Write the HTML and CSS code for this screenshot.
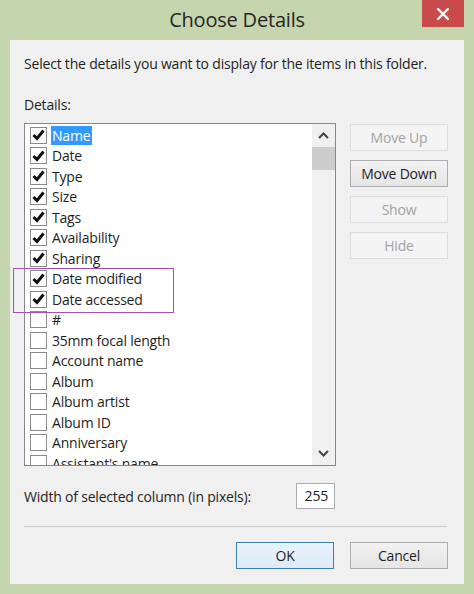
FILE: index.html
```html
<!DOCTYPE html>
<html lang="en">

<head>
  <meta charset="UTF-8" />
  <title>Choose Details</title>
  <link rel="stylesheet" href="styles.css">
</head>

<body>
  <div class="window">
    <div class="titlebar">
      <span class="title">Choose Details</span>
      <span class="close">
        <svg width="14" height="14" viewBox="0 0 14 14">
          <path d="M2 2 L12 12 M12 2 L2 12" stroke="#fff" stroke-width="2.4" stroke-linecap="round" />
        </svg>
      </span>
    </div>

    <div class="client">
      <p class="intro">Select the details you want to display for the items in this folder.</p>
      <p class="label">Details:</p>

      <div class="list-row">
        <div class="listbox">
          <ul class="items" id="items"></ul>
          <div class="scrollbar">
            <span class="arrow">
              <svg width="11" height="7" viewBox="0 0 11 7"><path d="M1 6 L5.5 1.5 L10 6" fill="none" stroke="#444" stroke-width="2" /></svg>
            </span>
            <span class="thumb"></span>
            <span class="track"></span>
            <span class="arrow">
              <svg width="11" height="7" viewBox="0 0 11 7"><path d="M1 1 L5.5 5.5 L10 1" fill="none" stroke="#444" stroke-width="2" /></svg>
            </span>
          </div>
          <div class="marker"></div>
        </div>

        <div class="side-buttons">
          <button class="btn" disabled>Move Up</button>
          <button class="btn">Move Down</button>
          <button class="btn" disabled>Show</button>
          <button class="btn" disabled>Hide</button>
        </div>
      </div>

      <div class="width-row">
        <span>Width of selected column (in pixels):</span>
        <span class="num-box">255</span>
      </div>

      <div class="separator"></div>

      <div class="footer">
        <button class="btn default">OK</button>
        <button class="btn">Cancel</button>
      </div>
    </div>
  </div>

  <script>
    const details = [
      ["Name", true], ["Date", true], ["Type", true], ["Size", true],
      ["Tags", true], ["Availability", true], ["Sharing", true],
      ["Date modified", true], ["Date accessed", true], ["#", false],
      ["35mm focal length", false], ["Account name", false], ["Album", false],
      ["Album artist", false], ["Album ID", false], ["Anniversary", false],
      ["Assistant's name", false]
    ];
    const tick = '<svg width="13" height="12" viewBox="0 0 13 12"><path d="M1.5 6 L5 9.5 L11.5 1.5" fill="none" stroke="#111" stroke-width="3" /></svg>';
    const list = document.getElementById("items");
    details.forEach(function (d, i) {
      const li = document.createElement("li");
      li.className = "item";
      li.innerHTML = '<span class="check">' + (d[1] ? tick : '') + '</span>' +
        '<span class="name' + (i === 0 ? ' selected' : '') + '"></span>';
      li.querySelector(".name").textContent = d[0];
      list.appendChild(li);
    });
  </script>
</body>

</html>
```

FILE: styles.css
```css
:root {
  --frame-green: #c5d5ae;
  --client-bg: #f0f0f0;
  --text-dark: #1e1e1e;
  --select-blue: #3399ff;
}

body {
  margin: 0;
  background: var(--frame-green);
  font-family: 'Open Sans', 'Noto Sans', sans-serif;
  font-size: 14px;
  letter-spacing: -0.2px;
  color: var(--text-dark);
}

.window {
  width: 474px;
  height: 594px;
  padding: 0 10px;
  box-sizing: border-box;
}

.titlebar {
  position: relative;
  height: 40px;
  display: flex;
  align-items: center;
  justify-content: center;
}

.title {
  font-size: 20px;
  color: #262626;
  margin-top: -2px;
}

.close {
  position: absolute;
  right: 0;
  top: 0;
  width: 42px;
  height: 27px;
  background: #c84a4b;
  display: flex;
  align-items: center;
  justify-content: center;
}

.client {
  background: var(--client-bg);
  height: 544px;
  padding: 0 16px 0 14px;
  box-sizing: border-box;
  display: flex;
  flex-direction: column;
}

.intro {
  margin: 14px 0 0;
  line-height: 20px;
}

.label {
  margin: 21px 0 0;
  line-height: 20px;
}

.list-row {
  display: flex;
  gap: 14px;
  margin-top: 8px;
}

.listbox {
  position: relative;
  width: 312px;
  height: 343px;
  border: 1px solid #828790;
  background: #fff;
  box-sizing: border-box;
  display: flex;
}

.items {
  list-style: none;
  margin: 0;
  padding: 1px 0 0 5px;
  flex: 1;
  height: 341px;
  box-sizing: border-box;
  overflow: hidden;
}

.item {
  height: 20.5px;
  display: flex;
  align-items: center;
  gap: 4px;
}

.check {
  width: 15px;
  height: 15px;
  border: 1px solid #8a8a8a;
  background: #fff;
  display: flex;
  align-items: center;
  justify-content: center;
  flex-shrink: 0;
}

.name {
  padding: 0 2px 0 1px;
  line-height: 19px;
}

.name.selected {
  background: var(--select-blue);
  color: #fff;
}

.scrollbar {
  width: 23px;
  background: #f0f0f0;
  display: flex;
  flex-direction: column;
}

.arrow {
  height: 23px;
  display: flex;
  align-items: center;
  justify-content: center;
}

.thumb {
  height: 23px;
  background: #cdcdcd;
}

.track {
  flex: 1;
}

.marker {
  position: absolute;
  left: -12px;
  top: 144px;
  width: 161px;
  height: 45px;
  border: 1.5px solid #a453b4;
  box-sizing: border-box;
}

.side-buttons {
  display: flex;
  flex-direction: column;
  gap: 9px;
  margin-top: 1px;
}

.btn {
  width: 98px;
  height: 27px;
  font-family: inherit;
  font-size: 14px;
  letter-spacing: -0.2px;
  color: var(--text-dark);
  background: linear-gradient(#f2f2f2, #e5e5e5);
  border: 1px solid #adadad;
  padding: 0;
}

.btn:disabled {
  color: #a3a3a3;
  background: #f4f4f4;
  border-color: #dcdcdc;
}

.btn.default {
  border-color: #3c7fb1;
  background: linear-gradient(#eaf3fb, #dcebf7);
}

.width-row {
  display: flex;
  align-items: center;
  justify-content: space-between;
  width: 311px;
  margin-top: 17px;
}

.num-box {
  width: 39px;
  height: 26px;
  box-sizing: border-box;
  border: 1px solid #abadb3;
  background: #fff;
  text-align: right;
  padding: 2px 6px 0 0;
}

.separator {
  width: 423px;
  height: 1px;
  background: #c8c8c8;
  margin-top: 17px;
}

.footer {
  display: flex;
  justify-content: flex-end;
  gap: 16px;
  margin-top: 15px;
}
```
